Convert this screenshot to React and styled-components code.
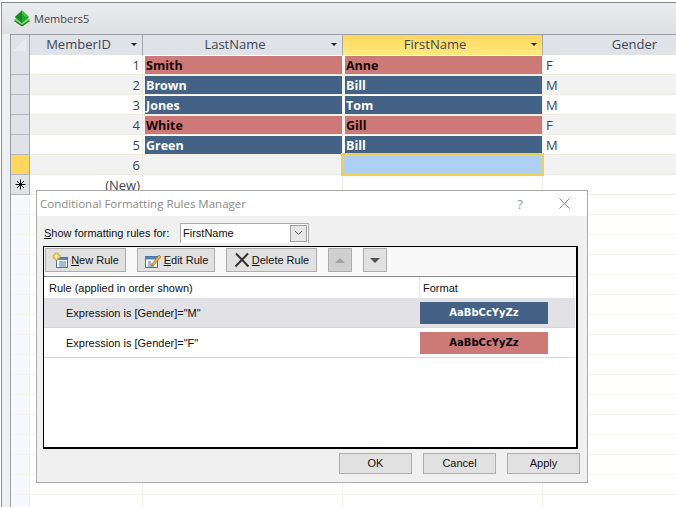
import React from "react";
import styled, { createGlobalStyle } from "styled-components";

const GlobalStyle = createGlobalStyle`
  html, body {
    margin: 0;
    padding: 0;
    background: #ffffff;
    overflow: hidden;
  }
  #root {
    width: 676px;
    height: 507px;
  }
`;

const Page = styled.div`
  position: relative;
  width: 676px;
  height: 507px;
  overflow: hidden;
  box-sizing: border-box;
  padding: 2px 0 0 1px;
  font-family: "Open Sans", "Noto Sans", sans-serif;
`;

const AccessWindow = styled.div`
  height: 505px;
  box-sizing: border-box;
  border-top: 1px solid #7f8890;
  border-left: 1px solid #8a9098;
  background: #eeeff2;
  padding-left: 8px;
  display: flex;
  flex-direction: column;
`;

const TitleBar = styled.div`
  height: 31px;
  margin-left: -8px;
  padding-left: 11px;
  display: flex;
  align-items: center;
  gap: 3px;
  background: linear-gradient(#ebecef, #dfe0e3);
  font-size: 11px;
  color: #444;
  flex: none;
`;

const Datasheet = styled.div`
  flex: 1;
  background: #fff;
  border-left: 1px solid #9a9fa6;
  border-top: 1px solid #9a9fa6;
`;

const Row = styled.div`
  display: flex;
  height: 20px;
  box-sizing: border-box;
  background: ${(p) => (p.$alt ? "#f2f2f2" : "#fff")};
  border-bottom: 1px solid ${(p) => (p.$faint ? "#f6f4ec" : "#efece0")};
`;

const HeaderRow = styled(Row)`
  background: #dfe2e7;
  border-bottom: none;
`;

const Selector = styled.div`
  width: 19px;
  flex: none;
  box-sizing: border-box;
  margin-bottom: -1px;
  background: ${(p) => (p.$active ? "#ffd75f" : "#dfe2e7")};
  border-right: 1px solid #a4a9b0;
  border-bottom: 1px solid #b4b9c0;
  display: flex;
  align-items: center;
  justify-content: center;
`;

const EmptySelector = styled.div`
  width: 19px;
  flex: none;
  background: #f6f8fd;
  box-sizing: border-box;
  border-right: 1px solid #f3f1e8;
`;

const Corner = styled.div`
  width: 19px;
  flex: none;
  box-sizing: border-box;
  border-right: 1px solid #a4a9b0;
  display: flex;
  align-items: center;
  justify-content: center;
`;

const HeadCell = styled.div`
  position: relative;
  width: ${(p) => p.$w}px;
  flex: none;
  box-sizing: border-box;
  border-right: 1px solid #a4a9b0;
  background: ${(p) =>
    p.$active ? "linear-gradient(#ffd65c, #ffe97f)" : "#dfe2e7"};
  font-size: 13px;
  line-height: 19px;
  color: #3c4654;
  text-align: center;
  padding-right: ${(p) => p.$pad || 0}px;
`;

const SortArrow = styled.span`
  position: absolute;
  right: 5px;
  top: 8px;
  width: 0;
  height: 0;
  border-left: 3px solid transparent;
  border-right: 3px solid transparent;
  border-top: 3px solid #222;
`;

const Cell = styled.div`
  width: ${(p) => p.$w}px;
  flex: none;
  box-sizing: border-box;
  border-right: 1px solid ${(p) => (p.$faint ? "#f3f1e8" : "#efece0")};
  font-size: 13px;
  line-height: 20px;
  color: #3c4654;
  text-align: ${(p) => (p.$right ? "right" : "left")};
  padding: 0 2px 0 3px;
`;

const FillCell = styled.div`
  position: relative;
  width: ${(p) => p.$w}px;
  flex: none;
  box-sizing: border-box;
  padding: 1px 0 1px 2px;
  border-right: 1px solid #efece0;
`;

const Band = styled.div`
  height: 18px;
  padding-left: 1px;
  background: ${(p) => (p.$g === "F" ? "#cd7978" : "#446285")};
  color: ${(p) => (p.$g === "F" ? "#1a0505" : "#ffffff")};
  font-weight: 700;
  font-size: 12.5px;
  line-height: 19px;
`;

const FocusCell = styled.div`
  position: absolute;
  left: -2px;
  top: -2px;
  width: 203px;
  height: 23px;
  box-sizing: border-box;
  background: #aed0f5;
  border: 2px solid #f3cf50;
`;

const Dialog = styled.div`
  position: absolute;
  left: 36px;
  top: 190px;
  width: 552px;
  height: 293px;
  box-sizing: border-box;
  border: 1px solid #aaaaaa;
  background: #f0f0f0;
  display: flex;
  flex-direction: column;
  color: #111;
  font-family: "Liberation Sans", Arial, sans-serif;
  font-size: 11px;
`;

const DialogTitle = styled.div`
  height: 25px;
  flex: none;
  background: #fff;
  display: flex;
  align-items: center;
  padding-left: 3px;
  font-family: "Open Sans", sans-serif;
  font-size: 11.5px;
  color: #8b8b8b;
`;

const TitleText = styled.span`
  flex: 1;
`;

const HelpMark = styled.span`
  width: 14px;
  margin-right: 32px;
  font-size: 13px;
  color: #999;
  text-align: center;
`;

const CloseMark = styled.svg`
  width: 11px;
  height: 11px;
  margin-right: 17px;
`;

const FilterRow = styled.div`
  height: 30px;
  flex: none;
  display: flex;
  align-items: center;
  padding: 3px 0 0 7px;
  box-sizing: border-box;
  gap: 11px;
`;

const FilterLabel = styled.span`
  width: 125px;
  white-space: nowrap;
`;

const Combo = styled.div`
  width: 129px;
  height: 20px;
  box-sizing: border-box;
  background: #fff;
  border: 1px solid #ababab;
  border-bottom: none;
  padding-left: 2px;
  display: flex;
  align-items: center;
  justify-content: space-between;
`;

const ComboButton = styled.div`
  width: 17px;
  height: 17px;
  margin-right: 1px;
  box-sizing: border-box;
  background: #e6e6e6;
  border: 1px solid #a0a0a0;
  display: flex;
  align-items: center;
  justify-content: center;
`;

const RulesPanel = styled.div`
  margin-left: 6px;
  width: 535px;
  height: 203px;
  flex: none;
  box-sizing: border-box;
  border: 1px solid #000;
  border-right-width: 2px;
  border-bottom-width: 2px;
  background: #fff;
  display: flex;
  flex-direction: column;
`;

const Toolbar = styled.div`
  height: 30px;
  flex: none;
  box-sizing: border-box;
  background: #f8f8f8;
  padding: 1px 0 0 1px;
  display: flex;
  align-items: flex-start;
  gap: 11px;
  border-bottom: 1px solid #8c8c8c;
`;

const ToolButton = styled.div`
  width: ${(p) => p.$w}px;
  height: 24px;
  box-sizing: border-box;
  background: ${(p) => (p.$off ? "#cfcfcf" : "#e1e1e1")};
  border: 1px solid #adadad;
  display: flex;
  align-items: center;
  justify-content: center;
  gap: 2px;
  color: #111;
`;

const Key = styled.span`
  text-decoration: underline;
  text-underline-offset: 1px;
`;

const Triangle = styled.span`
  width: 0;
  height: 0;
  border-left: 5px solid transparent;
  border-right: 5px solid transparent;
  ${(p) =>
    p.$up ? "border-bottom: 5px solid #a0a0a0;" : "border-top: 5px solid #505050;"}
`;

const ListHeader = styled.div`
  height: 21px;
  flex: none;
  display: flex;
  margin-right: 2px;
  line-height: 22px;
  border-right: 1px solid #ececec;
`;

const RuleHead = styled.div`
  width: 376px;
  padding-left: 5px;
  box-sizing: border-box;
  border-right: 1px solid #e4e4e4;
`;

const FormatHead = styled.div`
  padding-left: 3px;
`;

const RuleRow = styled.div`
  height: 30px;
  flex: none;
  box-sizing: border-box;
  margin-right: 1px;
  background: ${(p) => (p.$selected ? "#e1e1e6" : "#fff")};
  border-bottom: 1px solid #d8d8d8;
  display: flex;
  align-items: center;
`;

const RuleText = styled.div`
  width: 376px;
  padding-left: 22px;
  box-sizing: border-box;
`;

const Swatch = styled.div`
  width: 128px;
  height: 22px;
  background: ${(p) => (p.$g === "F" ? "#cd7978" : "#446285")};
  color: ${(p) => (p.$g === "F" ? "#000" : "#fff")};
  font-family: "DejaVu Sans", sans-serif;
  font-weight: 700;
  font-size: 10px;
  line-height: 22px;
  text-align: center;
`;

const Actions = styled.div`
  display: flex;
  justify-content: flex-end;
  gap: 11px;
  padding: 4px 7px 0 0;
`;

const ActionButton = styled.div`
  width: 73px;
  height: 21px;
  box-sizing: border-box;
  background: #e1e1e1;
  border: 1px solid #adadad;
  text-align: center;
  line-height: 19px;
`;

const columns = [113, 200, 200, 184];

const members = [
  { id: 1, last: "Smith", first: "Anne", gender: "F" },
  { id: 2, last: "Brown", first: "Bill", gender: "M" },
  { id: 3, last: "Jones", first: "Tom", gender: "M" },
  { id: 4, last: "White", first: "Gill", gender: "F" },
  { id: 5, last: "Green", first: "Bill", gender: "M" },
];

const DiamondIcon = () => (
  <svg width="18" height="17" viewBox="0 0 18 17">
    <path d="M9 6 L17 11 L9 16.5 L1 11 Z" fill="#1c6f22" />
    <path d="M9 4.5 L17 9.5 L9 15 L1 9.5 Z" fill="#7fd66f" />
    <path d="M9 0.5 L16 7 L9 13 L2 7 Z" fill="#25a32f" />
    <path d="M9 0.5 L9 13 L2 7 Z" fill="#148a22" />
    <path d="M9 0.5 L16 7 L12.5 7 L9 3.5 Z" fill="#46bd4a" />
  </svg>
);

const NewRecordStar = () => (
  <svg width="11" height="11" viewBox="0 0 11 11">
    <path
      d="M5.5 0.5 V10.5 M0.5 5.5 H10.5 M2 2 L9 9 M9 2 L2 9"
      stroke="#111"
      strokeWidth="1"
      fill="none"
    />
  </svg>
);

const NewRuleIcon = () => (
  <svg width="17" height="17" viewBox="0 0 17 17">
    <rect x="4.5" y="5.5" width="11" height="10" fill="#fff" stroke="#4a76a8" />
    <rect x="5" y="6" width="10" height="2" fill="#4f86c6" />
    <path d="M7 10h7M7 12h7M7 14h7" stroke="#4a76a8" />
    <path d="M3 1h3v2h2v3H6v2H3V6H1V3h2z" fill="#f7e27a" stroke="#c9a32a" strokeWidth="0.8" />
  </svg>
);

const EditRuleIcon = () => (
  <svg width="18" height="17" viewBox="0 0 18 17">
    <rect x="1.5" y="4.5" width="12" height="11" fill="#fff" stroke="#4a76a8" />
    <rect x="2" y="5" width="11" height="2.5" fill="#4f86c6" />
    <path d="M4 10h3M4 12h5M4 14h6" stroke="#4a76a8" />
    <path d="M8 12 L15 3 L17 5 L10 13 L7.5 14 Z" fill="#f2b33d" stroke="#8a6414" strokeWidth="0.6" />
  </svg>
);

const DeleteIcon = () => (
  <svg width="16" height="16" viewBox="0 0 16 16">
    <path d="M2 1.5 L14.5 14.5 M14 1.5 L1.5 14.5" stroke="#333" strokeWidth="2" />
  </svg>
);

const App = () => {
  const blanks = Array.from({ length: 16 }, (_, i) => i);

  return (
    <Page>
      <GlobalStyle />
      <AccessWindow>
        <TitleBar>
          <DiamondIcon />
          Members5
        </TitleBar>
        <Datasheet>
          <HeaderRow>
            <Corner>
              <svg width="12" height="12" viewBox="0 0 12 12">
                <path d="M0 12 L12 0 L12 12 Z" fill="#e8eaee" stroke="#f5f6f8" strokeWidth="0.5" />
              </svg>
            </Corner>
            <HeadCell $w={columns[0]} $pad={15}>
              MemberID
              <SortArrow />
            </HeadCell>
            <HeadCell $w={columns[1]} $pad={15}>
              LastName
              <SortArrow />
            </HeadCell>
            <HeadCell $w={columns[2]} $pad={15} $active>
              FirstName
              <SortArrow />
            </HeadCell>
            <HeadCell $w={columns[3]}>Gender</HeadCell>
          </HeaderRow>
          {members.map((m, i) => (
            <Row key={m.id} $alt={i % 2 === 1}>
              <Selector />
              <Cell $w={columns[0]} $right>
                {m.id}
              </Cell>
              <FillCell $w={columns[1]}>
                <Band $g={m.gender}>{m.last}</Band>
              </FillCell>
              <FillCell $w={columns[2]}>
                <Band $g={m.gender}>{m.first}</Band>
              </FillCell>
              <Cell $w={columns[3]}>{m.gender}</Cell>
            </Row>
          ))}
          <Row $alt>
            <Selector $active />
            <Cell $w={columns[0]} $right>
              6
            </Cell>
            <Cell $w={columns[1]} />
            <FillCell $w={columns[2]}>
              <FocusCell />
            </FillCell>
            <Cell $w={columns[3]} />
          </Row>
          <Row>
            <Selector>
              <NewRecordStar />
            </Selector>
            <Cell $w={columns[0]} $right>
              (New)
            </Cell>
            <Cell $w={columns[1]} />
            <Cell $w={columns[2]} />
            <Cell $w={columns[3]} />
          </Row>
          {blanks.map((b) => (
            <Row key={b} $faint>
              <EmptySelector />
              <Cell $w={columns[0]} $faint />
              <Cell $w={columns[1]} $faint />
              <Cell $w={columns[2]} $faint />
              <Cell $w={columns[3]} $faint />
            </Row>
          ))}
        </Datasheet>
      </AccessWindow>

      <Dialog>
        <DialogTitle>
          <TitleText>Conditional Formatting Rules Manager</TitleText>
          <HelpMark>?</HelpMark>
          <CloseMark viewBox="0 0 11 11">
            <path d="M0.5 0.5 L10.5 10.5 M10.5 0.5 L0.5 10.5" stroke="#888" fill="none" />
          </CloseMark>
        </DialogTitle>
        <FilterRow>
          <FilterLabel>
            <Key>S</Key>how formatting rules for:
          </FilterLabel>
          <Combo>
            FirstName
            <ComboButton>
              <svg width="9" height="6" viewBox="0 0 9 6">
                <path d="M1 1 L4.5 4.5 L8 1" stroke="#555" fill="none" />
              </svg>
            </ComboButton>
          </Combo>
        </FilterRow>
        <RulesPanel>
          <Toolbar>
            <ToolButton $w={81}>
              <NewRuleIcon />
              <span>
                <Key>N</Key>ew Rule
              </span>
            </ToolButton>
            <ToolButton $w={78}>
              <EditRuleIcon />
              <span>
                <Key>E</Key>dit Rule
              </span>
            </ToolButton>
            <ToolButton $w={91}>
              <DeleteIcon />
              <span>
                <Key>D</Key>elete Rule
              </span>
            </ToolButton>
            <ToolButton $w={24} $off>
              <Triangle $up />
            </ToolButton>
            <ToolButton $w={24}>
              <Triangle />
            </ToolButton>
          </Toolbar>
          <ListHeader>
            <RuleHead>Rule (applied in order shown)</RuleHead>
            <FormatHead>Format</FormatHead>
          </ListHeader>
          <RuleRow $selected>
            <RuleText>Expression is [Gender]="M"</RuleText>
            <Swatch $g="M">AaBbCcYyZz</Swatch>
          </RuleRow>
          <RuleRow>
            <RuleText>Expression is [Gender]="F"</RuleText>
            <Swatch $g="F">AaBbCcYyZz</Swatch>
          </RuleRow>
        </RulesPanel>
        <Actions>
          <ActionButton>OK</ActionButton>
          <ActionButton>Cancel</ActionButton>
          <ActionButton>Apply</ActionButton>
        </Actions>
      </Dialog>
    </Page>
  );
};

export default App;
